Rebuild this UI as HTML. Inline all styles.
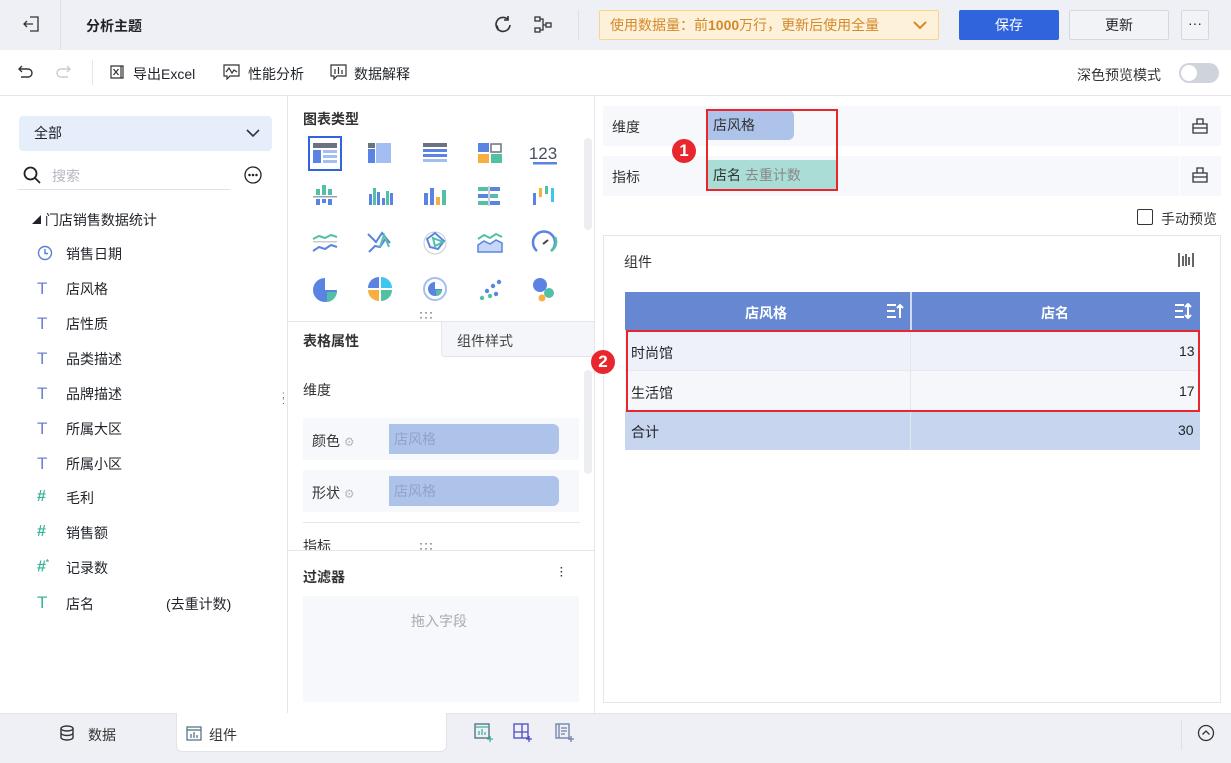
<!DOCTYPE html>
<html><head><meta charset="utf-8"><style>
*{margin:0;padding:0;box-sizing:border-box}
body{width:1231px;height:763px;overflow:hidden;position:relative;font-family:"Liberation Sans","Noto Sans CJK SC",sans-serif;font-size:14px;color:#1f2329;background:#fff}
.a{position:absolute}
.t{white-space:nowrap}
svg{display:block}
</style></head><body>
<!-- top bar -->
<div class="a" style="left:0;top:0;width:1231px;height:50px;background:#eef0f5"></div>
<div class="a" style="left:60px;top:0;width:1px;height:50px;background:#dcdfe6"></div>
<svg class="a" style="left:22px;top:15px" width="18" height="18" viewBox="0 0 18 18" fill="none" stroke="#333" stroke-width="1.3"><path d="M8 2h8v14H8M2 9h9M5 6L2 9l3 3"/></svg>
<div class="a t" style="left:86px;top:16px;font-weight:bold;font-size:14px">分析主题</div>
<svg class="a" style="left:493px;top:15px" width="20" height="20" viewBox="0 0 20 20" fill="none" stroke="#333" stroke-width="1.6"><path d="M15 4.5A7 7 0 1 0 17 10M5 15.5A7 7 0 0 0 3 10" /><path d="M15 1v4h-4"/></svg>
<svg class="a" style="left:533px;top:15px" width="20" height="20" viewBox="0 0 20 20" fill="none" stroke="#333" stroke-width="1.3"><rect x="2" y="2" width="5" height="4"/><rect x="2" y="13" width="5" height="4"/><rect x="13" y="8" width="5" height="4"/><path d="M7 4h3v11H7M10 10h3"/></svg>
<div class="a" style="left:578px;top:10px;width:1px;height:30px;background:#dcdfe6"></div>
<div class="a t" style="left:599px;top:10px;width:340px;height:30px;background:#fdf1d9;border:1px solid #f6d58e;border-radius:2px;color:#d4892a;font-size:14px;line-height:28px;padding-left:10px">使用数据量：前<b>1000</b>万行，更新后使用全量<span style="position:absolute;right:10px;top:0">
<svg style="display:inline-block;margin-top:8px" width="16" height="12" viewBox="0 0 16 12" fill="none" stroke="#d4892a" stroke-width="2"><path d="M2 3l6 6 6-6"/></svg></span></div>
<div class="a t" style="left:959px;top:10px;width:100px;height:30px;background:#2f64dc;border-radius:2px;color:#fff;text-align:center;line-height:30px">保存</div>
<div class="a t" style="left:1069px;top:10px;width:100px;height:30px;background:#f2f3f7;border:1px solid #d5d8de;border-radius:2px;text-align:center;line-height:28px">更新</div>
<div class="a t" style="left:1181px;top:10px;width:28px;height:30px;background:#f2f3f7;border:1px solid #d5d8de;border-radius:2px;text-align:center;line-height:24px">···</div>
<!-- toolbar -->
<div class="a" style="left:0;top:95px;width:1231px;height:1px;background:#e4e6eb"></div>
<svg class="a" style="left:16px;top:64px" width="18" height="16" viewBox="0 0 18 16" fill="none" stroke="#333" stroke-width="1.4"><path d="M4 5h8a4 4 0 0 1 0 8H5M6 2L3 5l3 3"/></svg>
<svg class="a" style="left:55px;top:64px" width="18" height="16" viewBox="0 0 18 16" fill="none" stroke="#c8ccd2" stroke-width="1.4"><path d="M14 5H6a4 4 0 0 0 0 8h7M12 2l3 3-3 3"/></svg>
<div class="a" style="left:92px;top:60px;width:1px;height:25px;background:#e4e6eb"></div>
<svg class="a" style="left:109px;top:64px" width="16" height="16" viewBox="0 0 16 16" fill="none" stroke="#333" stroke-width="1.2"><path d="M2 2h10v12H2zM12 2h2v12h-2M4.5 5l5 6M9.5 5l-5 6"/></svg>
<div class="a t" style="left:133px;top:64px">导出Excel</div>
<svg class="a" style="left:223px;top:64px" width="17" height="16" viewBox="0 0 17 16" fill="none" stroke="#333" stroke-width="1.2"><path d="M1 1h15v11H7l-3 3v-3H1zM3 8l3-4 3 5 2-3 3 2"/></svg>
<div class="a t" style="left:248px;top:64px">性能分析</div>
<svg class="a" style="left:330px;top:64px" width="17" height="16" viewBox="0 0 17 16" fill="none" stroke="#333" stroke-width="1.2"><path d="M1 1h15v11H7l-3 3v-3H1zM5 5v5M8.5 3v7M12 6v4"/></svg>
<div class="a t" style="left:354px;top:64px">数据解释</div>
<div class="a t" style="left:1077px;top:65px;color:#333">深色预览模式</div>
<div class="a" style="left:1179px;top:63px;width:40px;height:20px;border-radius:10px;background:#cfd3da"><div class="a" style="left:2px;top:2px;width:16px;height:16px;border-radius:8px;background:#fff"></div></div>
<!-- left panel -->
<div class="a" style="left:287px;top:96px;width:1px;height:617px;background:#e4e6eb"></div>
<div class="a t" style="left:19px;top:116px;width:253px;height:35px;background:#e6eefc;border-radius:4px;padding-left:15px;line-height:35px">全部
<svg class="a" style="right:12px;top:12px" width="14" height="10" viewBox="0 0 14 10" fill="none" stroke="#333" stroke-width="1.6"><path d="M1 2l6 6 6-6"/></svg></div>
<svg class="a" style="left:23px;top:166px" width="18" height="18" viewBox="0 0 18 18" fill="none" stroke="#222" stroke-width="1.8"><circle cx="7.5" cy="7.5" r="6"/><path d="M12 12l5 5"/></svg>
<div class="a t" style="left:52px;top:166px;color:#b4b8c0">搜索</div>
<div class="a" style="left:18px;top:189px;width:212px;height:1px;background:#dfe1e6"></div>
<svg class="a" style="left:244px;top:166px" width="18" height="18" viewBox="0 0 18 18" fill="none" stroke="#222" stroke-width="1.3"><circle cx="9" cy="9" r="8"/><circle cx="5.5" cy="9" r=".6" fill="#222"/><circle cx="9" cy="9" r=".6" fill="#222"/><circle cx="12.5" cy="9" r=".6" fill="#222"/></svg>
<div class="a t" style="left:32px;top:210px;font-size:14px"><span style="font-size:9px;vertical-align:2px">◢</span> 门店销售数据统计</div>
<svg class="a" style="left:37px;top:245px" width="16" height="16" viewBox="0 0 16 16" fill="none" stroke="#5b7fd6" stroke-width="1.4"><circle cx="8" cy="8" r="6.5"/><path d="M8 4v4.5h3"/></svg>
<div class="a t" style="left:66px;top:244px">销售日期</div>
<div class="a t" style="left:37px;top:279px;color:#6b7fd2;font-size:17px">T</div><div class="a t" style="left:66px;top:279px">店风格</div>
<div class="a t" style="left:37px;top:314px;color:#6b7fd2;font-size:17px">T</div><div class="a t" style="left:66px;top:314px">店性质</div>
<div class="a t" style="left:37px;top:349px;color:#6b7fd2;font-size:17px">T</div><div class="a t" style="left:66px;top:349px">品类描述</div>
<div class="a t" style="left:37px;top:384px;color:#6b7fd2;font-size:17px">T</div><div class="a t" style="left:66px;top:384px">品牌描述</div>
<div class="a t" style="left:37px;top:419px;color:#6b7fd2;font-size:17px">T</div><div class="a t" style="left:66px;top:419px">所属大区</div>
<div class="a t" style="left:37px;top:454px;color:#6b7fd2;font-size:17px">T</div><div class="a t" style="left:66px;top:454px">所属小区</div>
<div class="a t" style="left:37px;top:488px;color:#3bb39a;font-size:16px;font-weight:bold">#</div><div class="a t" style="left:66px;top:488px">毛利</div>
<div class="a t" style="left:37px;top:523px;color:#3bb39a;font-size:16px;font-weight:bold">#</div><div class="a t" style="left:66px;top:523px">销售额</div>
<div class="a t" style="left:37px;top:558px;color:#3bb39a;font-size:16px;font-weight:bold">#<sup style="font-size:8px">*</sup></div><div class="a t" style="left:66px;top:558px">记录数</div>
<div class="a t" style="left:37px;top:593px;color:#3bb39a;font-size:17px">T</div><div class="a t" style="left:66px;top:594px">店名</div><div class="a t" style="left:166px;top:594px">(去重计数)</div>
<div class="a t" style="left:282px;top:393px;color:#555;font-size:10px;line-height:6px">:<br>:</div>
<!-- middle panel -->
<div class="a t" style="left:303px;top:109px;font-weight:bold;font-size:14px;color:#333">图表类型</div>
<div class="a" style="left:308px;top:136px;width:34px;height:35px;border:2px solid #2f64dc"></div>
<svg class="a" style="left:290px;top:130px" width="290" height="180">
<g>
<rect x="23" y="13" width="24" height="5" fill="#6b7280"/><rect x="23" y="20" width="8" height="13" fill="#5a83e3"/><rect x="33" y="20" width="14" height="3" fill="#a3bff2"/><rect x="33" y="25" width="14" height="3" fill="#a3bff2"/><rect x="33" y="30" width="14" height="3" fill="#a3bff2"/>
<rect x="78" y="13" width="7" height="5" fill="#6b7280"/><rect x="86" y="13" width="15" height="20" fill="#a3bff2"/><rect x="78" y="19" width="7" height="14" fill="#5a83e3"/>
<rect x="133" y="13" width="24" height="4" fill="#6b7280"/><rect x="133" y="19" width="24" height="3" fill="#5a83e3"/><rect x="133" y="24" width="24" height="3" fill="#5a83e3"/><rect x="133" y="29" width="24" height="3" fill="#a3bff2"/>
<rect x="188" y="13" width="11" height="9" fill="#5a83e3"/><rect x="201" y="14" width="10" height="8" fill="none" stroke="#6b7280" stroke-width="1.5"/><rect x="188" y="24" width="11" height="9" fill="#f7b040"/><rect x="201" y="24" width="11" height="9" fill="#52c0a4"/>
<text x="253" y="29" font-size="17" fill="#4a5060" text-anchor="middle" font-family="Liberation Sans">123</text><rect x="243" y="32" width="24" height="2.5" fill="#5a83e3"/>
</g>
<g transform="translate(0,46)">
<rect x="23" y="20" width="24" height="1.5" fill="#9ca3af"/><rect x="26" y="13" width="4" height="6" fill="#52c0a4"/><rect x="32" y="9" width="4" height="10" fill="#52c0a4"/><rect x="38" y="13" width="4" height="6" fill="#52c0a4"/><rect x="26" y="23" width="4" height="6" fill="#5a83e3"/><rect x="32" y="23" width="4" height="4" fill="#5a83e3"/><rect x="38" y="23" width="4" height="6" fill="#5a83e3"/>
<rect x="79" y="18" width="3" height="11" fill="#5a83e3"/><rect x="83" y="12" width="3" height="17" fill="#52c0a4"/><rect x="87" y="16" width="3" height="13" fill="#5a83e3"/><rect x="92" y="22" width="3" height="7" fill="#5a83e3"/><rect x="96" y="15" width="3" height="14" fill="#52c0a4"/><rect x="100" y="17" width="3" height="12" fill="#5a83e3"/>
<rect x="134" y="17" width="4" height="12" fill="#5a83e3"/><rect x="140" y="12" width="4" height="17" fill="#5a83e3"/><rect x="146" y="21" width="4" height="8" fill="#f7b040"/><rect x="152" y="14" width="4" height="15" fill="#52c0a4"/>
<rect x="188" y="11" width="10" height="4" fill="#52c0a4"/><rect x="200" y="11" width="10" height="4" fill="#5a83e3"/><rect x="188" y="18" width="10" height="4" fill="#5a83e3"/><rect x="200" y="18" width="8" height="4" fill="#52c0a4"/><rect x="188" y="25" width="10" height="4" fill="#52c0a4"/><rect x="200" y="25" width="10" height="4" fill="#5a83e3"/><rect x="198.5" y="10" width="1" height="20" fill="#9ca3af"/>
<rect x="243" y="17" width="3" height="12" fill="#5a83e3"/><rect x="249" y="12" width="3" height="9" fill="#f7b040"/><rect x="255" y="10" width="3" height="8" fill="#52c0a4"/><rect x="261" y="12" width="3" height="14" fill="#3ec6f0"/>
</g>
<g transform="translate(0,91)" fill="none" stroke-width="2">
<path d="M23 18l6-3 6 2 6-3 6 2" stroke="#52c0a4"/><rect x="23" y="20" width="24" height="1.5" fill="#c8ccd2" stroke="none"/><path d="M23 30l6-4 6 2 6-4 6 2" stroke="#5a83e3"/>
<path d="M78 13l8 8 6-9 8 10M79 31l6-6 5 1 6-9" stroke="#5a83e3"/><path d="M90 26l4-12 5 12" stroke="#52c0a4"/>
<circle cx="145" cy="22" r="11" stroke="#c8ccd2" stroke-width="1"/><path d="M137 18l8-6 9 8-6 8-8-2z" stroke="#5a83e3"/><path d="M143 17l10 4-8 4z" stroke="#52c0a4"/>
<path d="M188 18l6-4 6 3 6-4 6 3" stroke="#52c0a4"/><path d="M188 24l6-4 6 3 6-4 6 3v9h-24z" fill="#c9d7f6" stroke="#5a83e3" stroke-width="1.5"/>
<path d="M247 30a11 11 0 1 1 14 0" stroke="#5a83e3" stroke-width="2.5"/><path d="M261 30a11 11 0 0 0 4-14" stroke="#52c0a4" stroke-width="2.5"/><path d="M253 23l5-4" stroke="#444"/>
</g>
<g transform="translate(0,137)">
<path d="M35 11a12 12 0 1 0 12 12H35z" fill="#5a83e3"/><path d="M37 25h10a11 11 0 0 1-10 10z" fill="#52c0a4"/>
<path d="M89 10a11 11 0 0 0-11 11h11z" fill="#5a83e3"/><path d="M91 10a11 11 0 0 1 11 11H91z" fill="#3ec6f0"/><path d="M78 23a11 11 0 0 0 11 11V23z" fill="#f7b040"/><path d="M91 23h11a11 11 0 0 1-11 11z" fill="#52c0a4"/>
<circle cx="145" cy="22" r="11" fill="none" stroke="#a3bff2" stroke-width="2"/><circle cx="145" cy="22" r="7" fill="#5a83e3"/><path d="M145 22v-7a7 7 0 0 1 7 7z" fill="#fff"/><path d="M146 23h6a6 6 0 0 1-6 6z" fill="#52c0a4"/>
<circle cx="192" cy="31" r="2.2" fill="#52c0a4"/><circle cx="197" cy="24" r="2.2" fill="#5a83e3"/><circle cx="200" cy="29" r="2.2" fill="#52c0a4"/><circle cx="203" cy="19" r="2.2" fill="#5a83e3"/><circle cx="206" cy="27" r="2.2" fill="#5a83e3"/><circle cx="209" cy="15" r="2.2" fill="#5a83e3"/>
<circle cx="250" cy="18" r="7" fill="#5a83e3"/><circle cx="259" cy="26" r="5" fill="#52c0a4"/><circle cx="252" cy="31" r="3.5" fill="#f7b040"/>
</g>
</svg>
<div class="a" style="left:584px;top:138px;width:8px;height:92px;background:#eceef2;border-radius:4px"></div>
<div class="a t" style="left:419px;top:310px;color:#333;font-size:12px;letter-spacing:1px;line-height:5px">···<br>···</div>
<div class="a" style="left:288px;top:321px;width:306px;height:1px;background:#e4e6eb"></div>
<div class="a t" style="left:303px;top:331px;font-weight:bold;color:#333">表格属性</div>
<div class="a" style="left:441px;top:322px;width:153px;height:35px;background:#f5f6fa;border-left:1px solid #e4e6eb;border-bottom:1px solid #e4e6eb;border-radius:0 0 0 4px"></div>
<div class="a t" style="left:457px;top:331px;color:#444">组件样式</div>
<div class="a t" style="left:303px;top:380px;color:#333">维度</div>
<div class="a" style="left:584px;top:370px;width:8px;height:104px;background:#eceef2;border-radius:4px"></div>
<div class="a" style="left:303px;top:418px;width:276px;height:42px;background:#f7f8fb"></div>
<div class="a t" style="left:312px;top:431px;color:#333">颜色 <span style="color:#b5b9c1;font-size:12px">⚙</span></div>
<div class="a t" style="left:389px;top:424px;width:170px;height:30px;background:#aec3e9;border-radius:0 6px 6px 0;color:#90a3c8;line-height:30px;padding-left:5px">店风格</div>
<div class="a" style="left:303px;top:470px;width:276px;height:42px;background:#f7f8fb"></div>
<div class="a t" style="left:312px;top:483px;color:#333">形状 <span style="color:#b5b9c1;font-size:12px">⚙</span></div>
<div class="a t" style="left:389px;top:476px;width:170px;height:30px;background:#aec3e9;border-radius:0 6px 6px 0;color:#90a3c8;line-height:30px;padding-left:5px">店风格</div>
<div class="a" style="left:303px;top:522px;width:277px;height:1px;background:#e4e6eb"></div>
<div class="a t" style="left:303px;top:536px;color:#333;height:14px;overflow:hidden">指标</div>
<div class="a t" style="left:419px;top:541px;color:#333;font-size:12px;letter-spacing:1px;line-height:5px">···<br>···</div>
<div class="a" style="left:288px;top:550px;width:306px;height:1px;background:#e4e6eb"></div>
<div class="a t" style="left:303px;top:567px;font-weight:bold;color:#333">过滤器</div>
<div class="a t" style="left:560px;top:567px;color:#333;font-weight:bold;font-size:10px;line-height:4px">·<br>·<br>·</div>
<div class="a" style="left:303px;top:596px;width:276px;height:106px;background:#f7f8fb"></div>
<div class="a t" style="left:411px;top:611px;color:#a6aab2">拖入字段</div>
<div class="a" style="left:594px;top:96px;width:1px;height:617px;background:#e4e6eb"></div>
<!-- right panel -->
<div class="a" style="left:603px;top:106px;width:618px;height:40px;background:#f7f8fb"></div>
<div class="a" style="left:1179px;top:106px;width:1px;height:40px;background:#fff"></div>
<div class="a t" style="left:612px;top:117px;color:#333">维度</div>
<div class="a t" style="left:708px;top:110px;width:86px;height:30px;background:#aec3e9;border-radius:0 6px 6px 0;line-height:30px;padding-left:5px;color:#333">店风格</div>
<div class="a" style="left:603px;top:156px;width:618px;height:40px;background:#f7f8fb"></div>
<div class="a" style="left:1179px;top:156px;width:1px;height:40px;background:#fff"></div>
<div class="a t" style="left:612px;top:167px;color:#333">指标</div>
<div class="a t" style="left:708px;top:160px;width:129px;height:30px;background:#a9ddd6;line-height:30px;padding-left:5px;color:#333">店名 <span style="color:#888">去重计数</span></div>
<svg class="a" style="left:1191px;top:117px" width="18" height="18" viewBox="0 0 18 18" fill="none" stroke="#333" stroke-width="1.3"><path d="M2 7h14v9H2zM6 7V2h6v5M2 11h14"/></svg>
<svg class="a" style="left:1191px;top:166px" width="18" height="18" viewBox="0 0 18 18" fill="none" stroke="#333" stroke-width="1.3"><path d="M2 7h14v9H2zM6 7V2h6v5M2 11h14"/></svg>
<div class="a" style="left:706px;top:109px;width:132px;height:82px;border:2px solid #e8262e"></div>
<div class="a t" style="left:672px;top:139px;width:24px;height:24px;border-radius:12px;background:#e8262e;color:#fff;text-align:center;line-height:24px;font-size:17px;font-weight:bold">1</div>
<div class="a" style="left:1137px;top:209px;width:16px;height:16px;border:1.5px solid #333;border-radius:2px"></div>
<div class="a t" style="left:1161px;top:209px;color:#333">手动预览</div>
<div class="a" style="left:603px;top:235px;width:618px;height:468px;border:1px solid #e4e6eb"></div>
<div class="a t" style="left:624px;top:252px;color:#333">组件</div>
<svg class="a" style="left:1177px;top:251px" width="18" height="18" viewBox="0 0 18 18" stroke="#333" stroke-width="1.5"><path d="M2 2v14M16 2v14M6 5v10M9 3v12M12 6v8"/></svg>
<div class="a" style="left:625px;top:292px;width:575px;height:38px;background:#6688d2"></div>
<div class="a" style="left:910px;top:292px;width:2px;height:158px;background:#fff;opacity:.7"></div>
<div class="a t" style="left:745px;top:303px;color:#fff;font-weight:bold">店风格</div>
<div class="a t" style="left:1041px;top:303px;color:#fff;font-weight:bold">店名</div>
<svg class="a" style="left:886px;top:303px" width="18" height="16" viewBox="0 0 18 16" stroke="#fff" stroke-width="2" fill="none"><path d="M1 2h9M1 8h8M1 14h9M14 15V2M11 5l3-3 3 3"/></svg>
<svg class="a" style="left:1174px;top:303px" width="18" height="16" viewBox="0 0 18 16" stroke="#fff" stroke-width="2" fill="none"><path d="M1 2h9M1 8h8M1 14h9M14 1v14M11 4l3-3 3 3M11 12l3 3 3-3"/></svg>
<div class="a" style="left:625px;top:330px;width:575px;height:40px;background:#eef1f8"></div>
<div class="a" style="left:625px;top:370px;width:575px;height:40px;background:#f6f7fb;border-top:1px solid #e6e9f1"></div>
<div class="a" style="left:625px;top:410px;width:575px;height:40px;background:#c7d5ee"></div>
<div class="a" style="left:910px;top:330px;width:1px;height:120px;background:#e3e7f0"></div>
<div class="a t" style="left:631px;top:343px">时尚馆</div><div class="a t" style="left:1179px;top:343px">13</div>
<div class="a t" style="left:631px;top:383px">生活馆</div><div class="a t" style="left:1179px;top:383px">17</div>
<div class="a t" style="left:631px;top:422px">合计</div><div class="a t" style="left:1178px;top:422px">30</div>
<div class="a" style="left:626px;top:330px;width:574px;height:82px;border:2px solid #e8262e"></div>
<div class="a t" style="left:591px;top:350px;width:24px;height:24px;border-radius:12px;background:#e8262e;color:#fff;text-align:center;line-height:24px;font-size:17px;font-weight:bold">2</div>
<!-- bottom bar -->
<div class="a" style="left:0;top:713px;width:1231px;height:50px;background:#eef0f5;border-top:1px solid #e0e3e8"></div>
<div class="a" style="left:176px;top:713px;width:271px;height:39px;background:#fff;border-radius:0 0 6px 6px;border:1px solid #e0e3e8;border-top:none"></div>
<svg class="a" style="left:59px;top:725px" width="16" height="16" viewBox="0 0 16 16" fill="none" stroke="#333" stroke-width="1.4"><ellipse cx="8" cy="3.5" rx="6" ry="2.5"/><path d="M2 3.5v9c0 1.4 2.7 2.5 6 2.5s6-1.1 6-2.5v-9M2 8c0 1.4 2.7 2.5 6 2.5S14 9.4 14 8"/></svg>
<div class="a t" style="left:88px;top:725px;color:#333">数据</div>
<svg class="a" style="left:186px;top:726px" width="16" height="15" viewBox="0 0 16 15" fill="none" stroke="#4a6c80" stroke-width="1.2"><rect x="1" y="1" width="14" height="13"/><path d="M1 4h14M5 12V8M8 12V6M11 12V9"/></svg>
<div class="a t" style="left:209px;top:725px;color:#333">组件</div>
<svg class="a" style="left:474px;top:723px" width="20" height="20" viewBox="0 0 20 20" fill="none" stroke-width="1.3"><rect x="1" y="1" width="14" height="14" stroke="#4a6c80"/><path d="M1 4h14M5 12V8M8 12V6M11 12V9" stroke="#3bb39a"/><path d="M16 13v6M13 16h6" stroke="#3bb39a"/></svg>
<svg class="a" style="left:513px;top:723px" width="20" height="20" viewBox="0 0 20 20" fill="none" stroke-width="1.3" stroke="#4c4cbf"><rect x="1" y="1" width="14" height="14"/><path d="M1 9h14M9 1v14"/><path d="M16 13v6M13 16h6"/></svg>
<svg class="a" style="left:555px;top:723px" width="20" height="20" viewBox="0 0 20 20" fill="none" stroke-width="1.3" stroke="#6b7fa8"><rect x="1" y="1" width="13" height="14"/><path d="M4 1v14M6 5h6M6 8h6M6 11h4"/><path d="M16 13v6M13 16h6"/></svg>
<div class="a" style="left:1181px;top:720px;width:1px;height:30px;background:#dcdfe6"></div>
<svg class="a" style="left:1197px;top:724px" width="18" height="18" viewBox="0 0 18 18" fill="none" stroke="#333" stroke-width="1.3"><circle cx="9" cy="9" r="7.5"/><path d="M5.5 10.5L9 7l3.5 3.5"/></svg>
</body></html>
